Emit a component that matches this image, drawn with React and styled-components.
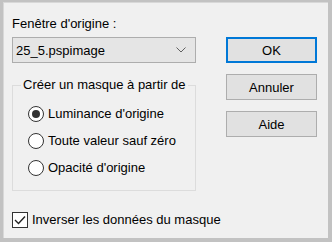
import React from 'react';
import styled, { createGlobalStyle } from 'styled-components';

const GlobalStyle = createGlobalStyle`
  html, body {
    margin: 0;
    padding: 0;
    background: #c2c2c2;
  }
  body {
    font-family: "Liberation Sans", Arial, sans-serif;
    font-size: 13px;
    color: #000;
  }
`;

const Dialog = styled.div`
  box-sizing: border-box;
  width: 332px;
  height: 242px;
  border-style: solid;
  border-color: #c2c2c2;
  border-width: 2px 4px 4px 3px;
  background: #f0f0f0;
  padding: 12px 0 0 9px;
  display: flex;
  gap: 30px;
  box-shadow: inset 1px 1px 0 #d8d8d8;
`;

const LeftColumn = styled.div`
  width: 184px;
  display: flex;
  flex-direction: column;
`;

const RightColumn = styled.div`
  width: 91px;
  display: flex;
  flex-direction: column;
  gap: 11px;
  padding-top: 23px;
`;

const Label = styled.div`
  line-height: 16px;
  height: 16px;
  margin-bottom: 5px;
  padding-top: 2px;
`;

const Combo = styled.div`
  box-sizing: border-box;
  height: 26px;
  border: 1px solid #adadad;
  background: #e5e5e5;
  display: flex;
  align-items: center;
  justify-content: space-between;
  padding: 0 9px 0 3px;
`;

const GroupBox = styled.fieldset`
  margin: 14px 0 0 0;
  padding: 7px 0 9px 15px;
  border: 1px solid #dcdcdc;
  min-width: 0;
  display: flex;
  flex-direction: column;

  legend {
    padding: 0 2px;
    margin-left: -7px;
    line-height: 16px;
  }
`;

const Row = styled.label`
  display: flex;
  align-items: center;
  gap: 4px;
  height: 27px;
`;

const RadioMark = styled.span`
  box-sizing: border-box;
  width: 16px;
  height: 16px;
  border-radius: 50%;
  border: 1px solid #333;
  background: #fff;
  display: flex;
  align-items: center;
  justify-content: center;

  &::after {
    content: '';
    width: 8px;
    height: 8px;
    border-radius: 50%;
    background: ${p => (p.$checked ? '#333' : 'transparent')};
  }
`;

const CheckRow = styled.label`
  display: flex;
  align-items: center;
  gap: 4px;
  margin-top: 20px;
  height: 17px;
  white-space: nowrap;
`;

const CheckBox = styled.span`
  box-sizing: border-box;
  flex-shrink: 0;
  width: 16px;
  height: 16px;
  border: 1px solid #333;
  background: #fff;
  display: flex;
  align-items: center;
  justify-content: center;
`;

const Button = styled.div`
  box-sizing: border-box;
  height: 26px;
  background: #e1e1e1;
  border: ${p => (p.$default ? '2px solid #0078d7' : '1px solid #adadad')};
  display: flex;
  align-items: center;
  justify-content: center;
`;

const Chevron = () => (
  <svg width="10" height="6" viewBox="0 0 10 6">
    <path d="M0.5 0.5 L5 5 L9.5 0.5" fill="none" stroke="#606060" strokeWidth="1" />
  </svg>
);

const Tick = () => (
  <svg width="12" height="10" viewBox="0 0 12 10">
    <path d="M1 5 L4.5 8.5 L11 1.5" fill="none" stroke="#222" strokeWidth="1.4" />
  </svg>
);

const options = [
  { label: "Luminance d'origine", checked: true },
  { label: 'Toute valeur sauf zéro', checked: false },
  { label: "Opacité d'origine", checked: false },
];

export default function App() {
  return (
    <>
      <GlobalStyle />
      <Dialog>
        <LeftColumn>
          <Label>Fenêtre d'origine :</Label>
          <Combo>
            <span>25_5.pspimage</span>
            <Chevron />
          </Combo>
          <GroupBox>
            <legend>Créer un masque à partir de</legend>
            {options.map(o => (
              <Row key={o.label}>
                <RadioMark $checked={o.checked} />
                {o.label}
              </Row>
            ))}
          </GroupBox>
          <CheckRow>
            <CheckBox><Tick /></CheckBox>
            Inverser les données du masque
          </CheckRow>
        </LeftColumn>
        <RightColumn>
          <Button $default>OK</Button>
          <Button>Annuler</Button>
          <Button>Aide</Button>
        </RightColumn>
      </Dialog>
    </>
  );
}
